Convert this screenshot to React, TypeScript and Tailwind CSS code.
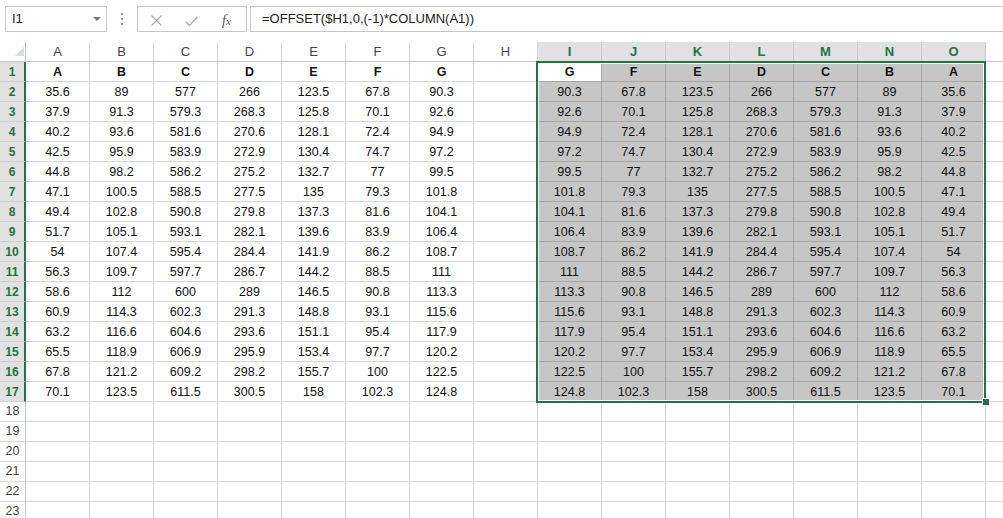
import React from "react";

const starts = [35.6, 89, 577, 266, 123.5, 67.8, 90.3];
const letters = ["A", "B", "C", "D", "E", "F", "G"];
const cols = ["A", "B", "C", "D", "E", "F", "G", "H", "I", "J", "K", "L", "M", "N", "O", "P"];

function fmt(n: number) {
  const v = Math.round(n * 10) / 10;
  return String(v);
}

function cellValue(colIdx: number, row: number): { text: string; bold: boolean } {
  let src = -1;
  if (colIdx <= 6) src = colIdx;
  else if (colIdx >= 8 && colIdx <= 14) src = 14 - colIdx;
  if (src < 0 || row > 17) return { text: "", bold: false };
  if (row === 1) return { text: letters[src], bold: true };
  return { text: fmt(starts[src] + 2.3 * (row - 2)), bold: false };
}

function Toolbar() {
  return (
    <div className="flex h-[42px] items-start overflow-hidden pt-[6px]">
      <div className="ml-[5px] flex h-[26px] w-[102px] shrink-0 items-center justify-between border border-[#c6c6c6] pl-[6px] pr-[5px] text-[13px] text-[#222]">
        <span>I1</span>
        <svg width="8" height="5" viewBox="0 0 8 5">
          <path d="M0 0 L8 0 L4 4 Z" fill="#777" />
        </svg>
      </div>
      <div className="flex h-[26px] w-[30px] shrink-0 flex-col items-center justify-center gap-[3px]">
        <div className="h-[2px] w-[2px] bg-[#9a9a9a]" />
        <div className="h-[2px] w-[2px] bg-[#9a9a9a]" />
        <div className="h-[2px] w-[2px] bg-[#9a9a9a]" />
      </div>
      <div className="relative h-[26px] w-[110px] shrink-0 border border-[#c6c6c6]">
        <svg className="absolute left-[13px] top-[8px]" width="11" height="11" viewBox="0 0 11 11">
          <path d="M0.5 0.5 L10.5 10.5 M10.5 0.5 L0.5 10.5" stroke="#a9a9a9" strokeWidth="1.2" fill="none" />
        </svg>
        <svg className="absolute left-[47px] top-[9px]" width="13" height="11" viewBox="0 0 13 11">
          <path d="M0.8 6 L4.5 9.6 L12.3 0.8" stroke="#a9a9a9" strokeWidth="1.4" fill="none" />
        </svg>
        <span
          className="absolute left-[84px] top-[3px] text-[14px] italic text-[#555]"
          style={{ fontFamily: '"Liberation Serif", serif' }}
        >
          f<span className="text-[11px]">x</span>
        </span>
      </div>
      <div className="ml-[3px] flex h-[26px] w-[780px] shrink-0 items-center border border-[#c6c6c6] pl-[11px] text-[13px] text-[#222]">
        =OFFSET($H1,0,(-1)*COLUMN(A1))
      </div>
    </div>
  );
}

function HeaderRow() {
  return (
    <div className="flex h-[20px]">
      <div className="relative h-[20px] w-[26px] shrink-0 border-b border-r border-[#c6c6c6]">
        <svg className="absolute left-[15px] top-[5px]" width="9" height="9" viewBox="0 0 9 9">
          <path d="M9 0 L9 9 L0 9 Z" fill="#dcdcdc" />
        </svg>
      </div>
      {cols.map((c, i) => {
        const sel = i >= 8 && i <= 14;
        return (
          <div
            key={c}
            className={
              sel
                ? "flex h-[20px] w-[64px] shrink-0 items-center justify-center border-b border-r border-b-[#c6c6c6] border-r-[#c9c9c9] bg-[#e1e1e1] text-[13px] font-bold text-[#217346]"
                : "flex h-[20px] w-[64px] shrink-0 items-center justify-center border-b border-r border-b-[#c6c6c6] border-r-[#dadada] bg-white text-[13px] text-[#444]"
            }
          >
            {c === "P" ? "" : c}
          </div>
        );
      })}
    </div>
  );
}

function DataRow({ row }: { row: number }) {
  const selRow = row <= 17;
  return (
    <div className="flex h-[20px]">
      <div
        className={
          selRow
            ? "flex h-[20px] w-[26px] shrink-0 items-center justify-center border-b border-r-2 border-b-[#cfcfcf] border-r-[#217346] bg-[#e1e1e1] text-[12px] font-bold text-[#217346]"
            : "flex h-[20px] w-[26px] shrink-0 items-center justify-center border-b border-r border-b-[#d4d4d4] border-r-[#c6c6c6] bg-white text-[12.5px] text-[#444]"
        }
      >
        {row}
      </div>
      {cols.map((c, i) => {
        const v = cellValue(i, row);
        const inSel = selRow && i >= 8 && i <= 14;
        const active = inSel && i === 8 && row === 1;
        let cls =
          "flex h-[20px] w-[64px] shrink-0 items-center justify-center border-b border-r pt-[1px] text-[12.5px] text-[#111] ";
        if (active) cls += "border-[#a6a6a6] bg-white";
        else if (inSel) cls += "border-[#a6a6a6] bg-[#c6c6c6]";
        else cls += "border-[#d4d4d4] bg-white";
        if (v.bold) cls += " font-bold";
        return (
          <div key={c} className={cls}>
            {v.text}
          </div>
        );
      })}
    </div>
  );
}

export default function App() {
  const rows = Array.from({ length: 23 }, (_, i) => i + 1);
  return (
    <div
      className="h-[518px] w-[1003px] overflow-hidden bg-white"
      style={{ fontFamily: '"Liberation Sans", Arial, sans-serif' }}
    >
      <Toolbar />
      <div className="relative">
        <HeaderRow />
        {rows.map((r) => (
          <DataRow key={r} row={r} />
        ))}
        <div className="absolute left-[536px] top-[19px] h-[342px] w-[450px] border-2 border-[#217346]">
          <div className="absolute inset-0 border border-white" />
        </div>
        <div className="absolute left-[982px] top-[356px] h-[8px] w-[8px] border border-white bg-[#217346]" />
      </div>
    </div>
  );
}
